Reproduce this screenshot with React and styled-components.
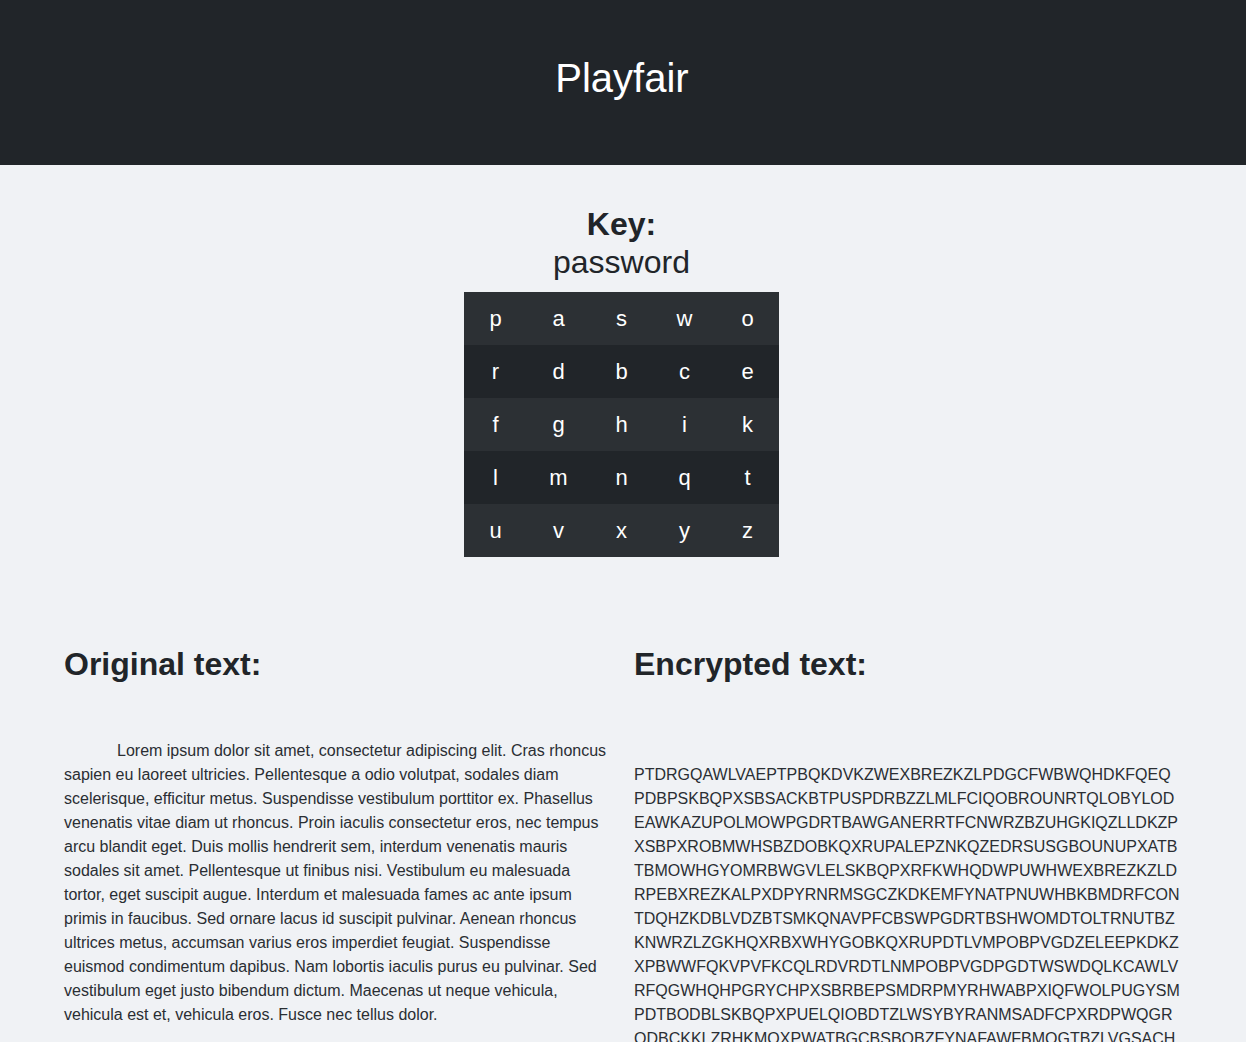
import React from "react";
import styled, { createGlobalStyle } from "styled-components";

const GlobalStyle = createGlobalStyle`
  html, body {
    margin: 0;
    padding: 0;
    background: #f0f2f5;
    color: #212529;
    font-family: "Liberation Sans", Arial, sans-serif;
  }
`;

const Header = styled.header`
  background: #212529;
  height: 165px;
  display: flex;
  align-items: center;
  justify-content: center;
  padding-right: 2px;
`;

const Title = styled.h1`
  margin: 0 0 9px;
  color: #fff;
  font-size: 40px;
  font-weight: 400;
  line-height: 1.2;
`;

const KeySection = styled.section`
  display: flex;
  flex-direction: column;
  align-items: center;
  padding: 40px 3px 0 0;
`;

const KeyLabel = styled.h2`
  margin: 0;
  font-size: 32px;
  font-weight: 700;
  line-height: 38px;
`;

const KeyWord = styled.div`
  font-size: 32px;
  line-height: 38px;
  margin-bottom: 11px;
`;

const Grid = styled.table`
  border-collapse: collapse;
  background: #212529;
  color: #fff;
  width: 315px;
`;

const Row = styled.tr`
  background: ${(p) => (p.$striped ? "#2c3034" : "#212529")};
  & + & td {
    border-top: 1px solid #32383e;
  }
`;

const Cell = styled.td`
  width: 63px;
  padding: 12px 0;
  text-align: center;
  font-size: 22px;
  line-height: 29px;
`;

const Columns = styled.section`
  display: grid;
  grid-template-columns: 546px 546px;
  column-gap: 24px;
  padding: 88px 0 40px 64px;
`;

const Column = styled.div`
  display: flex;
  flex-direction: column;
`;

const ColumnTitle = styled.h2`
  margin: 0;
  font-size: 32px;
  font-weight: 700;
  line-height: 38px;
`;

const Paragraph = styled.p`
  margin: ${(p) => p.$offset}px 0 0;
  font-size: 16px;
  line-height: 24px;
  color: #2a2e33;
  text-indent: ${(p) => p.$indent || 0}px;
`;

const CipherLine = styled.div`
  white-space: nowrap;
`;

const square = [
  ["p", "a", "s", "w", "o"],
  ["r", "d", "b", "c", "e"],
  ["f", "g", "h", "i", "k"],
  ["l", "m", "n", "q", "t"],
  ["u", "v", "x", "y", "z"],
];

const original =
  "Lorem ipsum dolor sit amet, consectetur adipiscing elit. Cras rhoncus sapien eu laoreet ultricies. Pellentesque a odio volutpat, sodales diam scelerisque, efficitur metus. Suspendisse vestibulum porttitor ex. Phasellus venenatis vitae diam ut rhoncus. Proin iaculis consectetur eros, nec tempus arcu blandit eget. Duis mollis hendrerit sem, interdum venenatis mauris sodales sit amet. Pellentesque ut finibus nisi. Vestibulum eu malesuada tortor, eget suscipit augue. Interdum et malesuada fames ac ante ipsum primis in faucibus. Sed ornare lacus id suscipit pulvinar. Aenean rhoncus ultrices metus, accumsan varius eros imperdiet feugiat. Suspendisse euismod condimentum dapibus. Nam lobortis iaculis purus eu pulvinar. Sed vestibulum eget justo bibendum dictum. Maecenas ut neque vehicula, vehicula est et, vehicula eros. Fusce nec tellus dolor.";

const encrypted = [
  "PTDRGQAWLVAEPTPBQKDVKZWEXBREZKZLPDGCFWBWQHDKFQEQ",
  "PDBPSKBQPXSBSACKBTPUSPDRBZZLMLFCIQOBROUNRTQLOBYLOD",
  "EAWKAZUPOLMOWPGDRTBAWGANERRTFCNWRZBZUHGKIQZLLDKZP",
  "XSBPXROBMWHSBZDOBKQXRUPALEPZNKQZEDRSUSGBOUNUPXATB",
  "TBMOWHGYOMRBWGVLELSKBQPXRFKWHQDWPUWHWEXBREZKZLD",
  "RPEBXREZKALPXDPYRNRMSGCZKDKEMFYNATPNUWHBKBMDRFCON",
  "TDQHZKDBLVDZBTSMKQNAVPFCBSWPGDRTBSHWOMDTOLTRNUTBZ",
  "KNWRZLZGKHQXRBXWHYGOBKQXRUPDTLVMPOBPVGDZELEEPKDKZ",
  "XPBWWFQKVPVFKCQLRDVRDTLNMPOBPVGDPGDTWSWDQLKCAWLV",
  "RFQGWHQHPGRYCHPXSBRBEPSMDRPMYRHWABPXIQFWOLPUGYSM",
  "PDTBODBLSKBQPXPUELQIOBDTZLWSYBYRANMSADFCPXRDPWQGR",
  "QDBCKKLZRHKMQXPWATBGCBSBQBZFYNAFAWFBMQGTBZLVGSACH",
];

const App = () => (
  <>
    <GlobalStyle />
    <Header>
      <Title>Playfair</Title>
    </Header>
    <KeySection>
      <KeyLabel>Key:</KeyLabel>
      <KeyWord>password</KeyWord>
      <Grid>
        <tbody>
          {square.map((row, i) => (
            <Row key={i} $striped={i % 2 === 0}>
              {row.map((letter) => (
                <Cell key={letter}>{letter}</Cell>
              ))}
            </Row>
          ))}
        </tbody>
      </Grid>
    </KeySection>
    <Columns>
      <Column>
        <ColumnTitle>Original text:</ColumnTitle>
        <Paragraph $offset={56} $indent={53}>
          {original}
        </Paragraph>
      </Column>
      <Column>
        <ColumnTitle>Encrypted text:</ColumnTitle>
        <Paragraph $offset={80}>
          {encrypted.map((line, i) => (
            <CipherLine key={i}>{line}</CipherLine>
          ))}
        </Paragraph>
      </Column>
    </Columns>
  </>
);

export default App;
